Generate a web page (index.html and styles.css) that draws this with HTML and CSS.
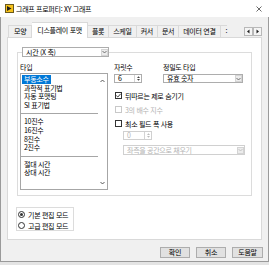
FILE: index.html
```html
<!DOCTYPE html>
<html lang="ko">
<head>
    <meta charset="UTF-8">
    <title>그래프 프로퍼티: XY 그래프</title>
    <link rel="stylesheet" href="styles.css">
</head>
<body>
    <div class="window">
        <div class="titlebar">
            <svg class="app-icon" width="9" height="9" viewBox="0 0 9 9">
                <rect x="0.5" y="0.5" width="8" height="8" fill="#f6c21c" stroke="#6b5a1e"/>
                <path d="M2 2 L6.5 4.5 L2 7 Z" fill="#1f1f1f"/>
            </svg>
            <span class="title">그래프 프로퍼티: XY 그래프</span>
            <svg class="close" width="6" height="6" viewBox="0 0 6 6">
                <path d="M0.5 0.5 L5.5 5.5 M5.5 0.5 L0.5 5.5" stroke="#444" stroke-width="0.8"/>
            </svg>
        </div>

        <div class="tabbar">
            <div class="tabs">
                <div class="tab first">모양</div>
                <div class="tab active">디스플레이 포맷</div>
                <div class="tab">플롯</div>
                <div class="tab">스케일</div>
                <div class="tab">커서</div>
                <div class="tab">문서</div>
                <div class="tab">데이터 연결</div>
                <div class="tab tab-more">:</div>
            </div>
            <div class="tab-scroll">
                <div class="tab-arrow"><svg width="7" height="7" viewBox="0 0 7 7"><path d="M4.5 1.5 L2 3.5 L4.5 5.5 Z" fill="#222"/></svg></div>
                <div class="tab-arrow"><svg width="7" height="7" viewBox="0 0 7 7"><path d="M2.5 1.5 L5 3.5 L2.5 5.5 Z" fill="#222"/></svg></div>
            </div>
        </div>

        <div class="panel">
            <div class="group">
                <div class="combo combo-axis">
                    <span class="combo-text">시간 (X 축)</span>
                    <span class="combo-arrow"><svg width="5" height="4" viewBox="0 0 5 4"><path d="M0.5 1 L2.5 3 L4.5 1" fill="none" stroke="#555" stroke-width="0.8"/></svg></span>
                </div>

                <div class="group-body">
                    <div class="col-type">
                        <div class="label">타입</div>
                        <div class="listbox">
                            <div class="list-items">
                                <div class="item selected"><span>부동소수</span></div>
                                <div class="item">과학적 표기법</div>
                                <div class="item">자동 포맷팅</div>
                                <div class="item">SI 표기법</div>
                                <div class="list-sep"></div>
                                <div class="item">10진수</div>
                                <div class="item">16진수</div>
                                <div class="item">8진수</div>
                                <div class="item">2진수</div>
                                <div class="list-sep"></div>
                                <div class="item">절대 시간</div>
                                <div class="item">상대 시간</div>
                            </div>
                            <div class="list-scroll">
                                <svg width="5" height="4" viewBox="0 0 5 4"><path d="M0.5 3 L2.5 1 L4.5 3" fill="none" stroke="#333" stroke-width="0.8"/></svg>
                                <svg width="5" height="4" viewBox="0 0 5 4"><path d="M0.5 1 L2.5 3 L4.5 1" fill="none" stroke="#333" stroke-width="0.8"/></svg>
                            </div>
                        </div>
                    </div>

                    <div class="col-format">
                        <div class="field-row">
                            <div class="field field-digits">
                                <div class="label">자릿수</div>
                                <div class="spin">
                                    <span class="spin-text">6</span>
                                    <span class="spin-btn">
                                        <svg width="5" height="7" viewBox="0 0 5 7"><path d="M1 3 L2.5 1.3 L4 3 Z M1 4 L2.5 5.7 L4 4 Z" fill="#444"/></svg>
                                    </span>
                                </div>
                            </div>
                            <div class="field field-precision">
                                <div class="label">정밀도 타입</div>
                                <div class="combo">
                                    <span class="combo-text">유효 숫자</span>
                                    <span class="combo-arrow"><svg width="5" height="4" viewBox="0 0 5 4"><path d="M0.5 1 L2.5 3 L4.5 1" fill="none" stroke="#555" stroke-width="0.8"/></svg></span>
                                </div>
                            </div>
                        </div>

                        <div class="check">
                            <span class="box"><svg width="7" height="7" viewBox="0 0 7 7"><path d="M1.3 3.6 L2.8 5 L5.7 1.8" fill="none" stroke="#222" stroke-width="0.9"/></svg></span>
                            뒤따르는 제로 숨기기
                        </div>
                        <div class="check disabled">
                            <span class="box"></span>
                            3의 배수 지수
                        </div>
                        <div class="check">
                            <span class="box"></span>
                            최소 필드 폭 사용
                        </div>

                        <div class="spin spin-width disabled">
                            <span class="spin-text">0</span>
                            <span class="spin-btn">
                                <svg width="5" height="7" viewBox="0 0 5 7"><path d="M1 3 L2.5 1.3 L4 3 Z M1 4 L2.5 5.7 L4 4 Z" fill="#bbb"/></svg>
                            </span>
                        </div>
                        <div class="combo combo-pad disabled">
                            <span class="combo-text">좌측을 공간으로 채우기</span>
                            <span class="combo-arrow"><svg width="5" height="4" viewBox="0 0 5 4"><path d="M0.5 1 L2.5 3 L4.5 1" fill="none" stroke="#bbb" stroke-width="0.8"/></svg></span>
                        </div>
                    </div>
                </div>
            </div>

            <div class="mode-box">
                <div class="radio-row"><span class="radio checked"></span>기본 편집 모드</div>
                <div class="radio-row"><span class="radio"></span>고급 편집 모드</div>
            </div>
        </div>

        <div class="buttons">
            <div class="btn">확인</div>
            <div class="btn">취소</div>
            <div class="btn btn-help">도움말</div>
        </div>
    </div>
</body>
</html>
```

FILE: styles.css
```css
body {
    margin: 0;
    background: #e4e4e4;
    font-family: "Noto Sans CJK KR", "Noto Sans", sans-serif;
    font-size: 7px;
    letter-spacing: -0.3px;
    color: #000;
}

.window {
    width: 269px;
    height: 262px;
    box-sizing: border-box;
    border: 1px solid #9a9a9a;
    border-top: none;
    background: #f0f0f0;
}

/* title bar */
.titlebar {
    height: 17px;
    margin: 0 -1px;
    background: #fff;
    display: flex;
    align-items: center;
    padding-left: 5px;
}

.app-icon {
    margin-right: 2px;
}

.title {
    flex: 1;
}

.close {
    margin-right: 7px;
}

/* tabs */
.tabbar {
    display: flex;
    align-items: flex-end;
    height: 21px;
    padding-left: 7px;
    margin-bottom: -1px;
    position: relative;
    z-index: 1;
}

.tabs {
    display: flex;
    align-items: flex-end;
    width: 228px;
    height: 21px;
    margin-right: 7px;
    overflow: hidden;
}

.tab {
    flex: none;
    height: 11px;
    line-height: 11px;
    padding: 0 4px;
    margin-bottom: 1px;
    border: 1px solid #d9d9d9;
    border-bottom: none;
    border-left: none;
    white-space: nowrap;
}

.tab.first {
    border-left: 1px solid #d9d9d9;
    padding: 0 5px;
}

.tab.active {
    height: 15px;
    line-height: 15px;
    margin-bottom: 0;
    padding: 0 5px;
    background: #fff;
}

.tab.tab-more {
    border-right: none;
    padding: 0 0 0 5px;
}

.tab-scroll {
    display: flex;
    margin: 0 0 2px 1px;
}

.tab-arrow {
    width: 9px;
    height: 9px;
    box-sizing: border-box;
    border: 1px solid #b8b8b8;
    background: #f4f4f4;
    display: flex;
    align-items: center;
    justify-content: center;
}

/* panel */
.panel {
    margin-left: 6px;
    width: 255px;
    height: 203px;
    box-sizing: border-box;
    border: 1px solid #d9d9d9;
    background: #fff;
    overflow: hidden;
}

.group {
    margin: 14px 0 0 9px;
    width: 235px;
    height: 144px;
    box-sizing: border-box;
    border: 1px solid #dcdcdc;
}

.combo {
    display: flex;
    align-items: center;
    height: 9px;
    box-sizing: border-box;
    border: 1px solid #adadad;
    background: #fff;
    padding-left: 3px;
    white-space: nowrap;
}

.combo-text {
    flex: 1;
    line-height: 7px;
}

.combo-arrow {
    width: 7px;
    height: 7px;
    box-sizing: border-box;
    border: 1px solid #d4d4d4;
    background: #ececec;
    display: flex;
    align-items: center;
    justify-content: center;
}

.combo-axis {
    margin: -6px 0 0 4px;
    width: 87px;
    height: 10px;
}

.group-body {
    display: flex;
    margin: 5px 0 0 2px;
}

.label {
    height: 11px;
    line-height: 11px;
}

.col-type {
    width: 88px;
}

.listbox {
    display: flex;
    height: 117px;
    box-sizing: border-box;
    border: 1px solid #a6a6a6;
}

.list-items {
    flex: 1;
    padding-top: 1px;
}

.item {
    height: 8.6px;
    line-height: 8.6px;
    padding-left: 3px;
    white-space: nowrap;
}

.item.selected span {
    display: inline-block;
    background: #0078d7;
    color: #fff;
    padding: 0 2px;
    margin-left: -2px;
}

.list-sep {
    height: 1px;
    background: #a6a6a6;
    margin: 4px 0 3px;
}

.list-scroll {
    width: 9px;
    display: flex;
    flex-direction: column;
    justify-content: space-between;
    align-items: center;
    padding: 5px 0 4px;
}

.col-format {
    margin-left: 6px;
}

.field-row {
    display: flex;
}

.field-digits {
    width: 28px;
}

.field-precision {
    width: 80px;
    margin-left: 21px;
}

.field .spin,
.field .combo {
    margin-top: 1px;
}

.spin {
    display: flex;
    align-items: center;
    height: 9px;
    box-sizing: border-box;
    border: 1px solid #adadad;
    background: #fff;
    padding-left: 3px;
}

.spin-text {
    flex: 1;
    line-height: 7px;
}

.spin-btn {
    width: 6px;
    height: 7px;
    border-left: 1px solid #d4d4d4;
    display: flex;
    align-items: center;
    justify-content: center;
}

.check {
    display: flex;
    align-items: center;
    height: 9px;
    margin-top: 5px;
    white-space: nowrap;
}

.field-row + .check {
    margin-top: 8px;
}

.box {
    width: 7px;
    height: 7px;
    box-sizing: border-box;
    border: 1px solid #333;
    background: #fff;
    margin: 0 3px 0 1px;
    display: flex;
}

.box svg {
    margin: -1px;
}

.check.disabled {
    color: #b4b4b4;
}

.check.disabled .box {
    border-color: #c8c8c8;
}

.spin-width {
    width: 29px;
    margin: 3px 0 0 9px;
}

.combo-pad {
    width: 122px;
    height: 10px;
    margin: 5px 0 0 9px;
}

.disabled {
    color: #b4b4b4;
}

.spin.disabled,
.combo.disabled {
    border-color: #d0d0d0;
}

/* edit mode radios */
.mode-box {
    margin: 11px 0 0 8px;
    width: 58px;
    height: 24px;
    box-sizing: border-box;
    border: 1px solid #dcdcdc;
    padding: 1px 0 0 1px;
}

.radio-row {
    display: flex;
    align-items: center;
    height: 11px;
    white-space: nowrap;
}

.radio {
    width: 7px;
    height: 7px;
    box-sizing: border-box;
    border: 1px solid #333;
    border-radius: 50%;
    background: #fff;
    margin-right: 3px;
    display: flex;
    align-items: center;
    justify-content: center;
}

.radio.checked::after {
    content: "";
    width: 3px;
    height: 3px;
    border-radius: 50%;
    background: #333;
}

/* dialog buttons */
.buttons {
    display: flex;
    justify-content: flex-end;
    gap: 6px;
    margin-top: 7px;
    padding-right: 5px;
}

.btn {
    width: 30px;
    height: 11px;
    line-height: 9px;
    box-sizing: border-box;
    border: 1px solid #adadad;
    background: #e1e1e1;
    text-align: center;
}

.btn-help {
    width: 31px;
}
```
